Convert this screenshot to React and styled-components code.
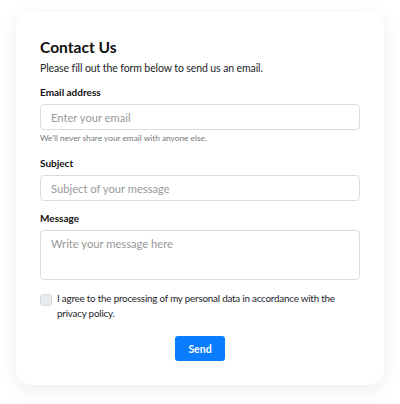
import React from "react";
import styled, { createGlobalStyle } from "styled-components";

const GlobalStyle = createGlobalStyle`
  * { box-sizing: border-box; }
  body {
    margin: 0;
    background: #ffffff;
    font-family: Lato, "Open Sans", sans-serif;
    color: #212529;
  }
`;

const Page = styled.div`
  padding: 12px 16px 20px;
`;

const Card = styled.form`
  background: #fff;
  border-radius: 16px;
  box-shadow: 0 4px 18px rgba(0, 0, 0, 0.08);
  padding: 25px 24px 24px;
  display: flex;
  flex-direction: column;
`;

const Title = styled.h1`
  margin: 0;
  font-size: 15.6px;
  line-height: 20px;
  font-weight: 700;
  color: #111;
`;

const Lead = styled.p`
  margin: 3px 0 0;
  font-size: 10.5px;
  letter-spacing: -0.1px;
  line-height: 16px;
  color: #212529;
`;

const Field = styled.div`
  display: flex;
  flex-direction: column;
  margin-top: ${(p) => p.$gap}px;
`;

const Label = styled.label`
  font-size: 10px;
  line-height: 14px;
  font-weight: 700;
  color: #111;
  margin-bottom: 5px;
`;

const Input = styled.input`
  width: 100%;
  height: 26px;
  border: 1px solid #dcdcdc;
  border-radius: 4px;
  padding: 0 10px;
  font-family: inherit;
  font-size: 11.2px;
  color: #333;
  outline: none;
  &::placeholder { color: #999; }
`;

const TextArea = styled.textarea`
  width: 100%;
  height: 50px;
  border: 1px solid #dcdcdc;
  border-radius: 4px;
  padding: 6px 10px;
  font-family: inherit;
  font-size: 11.2px;
  color: #333;
  resize: none;
  outline: none;
  &::placeholder { color: #999; }
`;

const Help = styled.small`
  margin-top: 2px;
  font-size: 8.3px;
  line-height: 12px;
  color: #777;
`;

const Consent = styled.label`
  display: flex;
  align-items: flex-start;
  gap: 5px;
  margin-top: 11px;
  font-size: 9.8px;
  letter-spacing: -0.2px;
  line-height: 15px;
  color: #212529;
`;

const Box = styled.span`
  flex: none;
  width: 12px;
  height: 12px;
  margin-top: 3px;
  border: 1px solid #d8d8d8;
  border-radius: 3px;
  background: #e9ecef;
`;

const Actions = styled.div`
  display: flex;
  justify-content: center;
  margin-top: 15px;
`;

const Button = styled.button`
  width: 50px;
  height: 25px;
  border: 0;
  border-radius: 3px;
  background: #0a7cff;
  color: #fff;
  font-family: inherit;
  font-size: 10.5px;
  font-weight: 700;
`;

export default function App() {
  return (
    <>
      <GlobalStyle />
      <Page>
        <Card onSubmit={(e) => e.preventDefault()}>
          <Title>Contact Us</Title>
          <Lead>Please fill out the form below to send us an email.</Lead>

          <Field $gap={9}>
            <Label>Email address</Label>
            <Input type="email" placeholder="Enter your email" />
            <Help>We'll never share your email with anyone else.</Help>
          </Field>

          <Field $gap={12}>
            <Label>Subject</Label>
            <Input placeholder="Subject of your message" />
          </Field>

          <Field $gap={10}>
            <Label>Message</Label>
            <TextArea placeholder="Write your message here" />
          </Field>

          <Consent>
            <Box />
            <span>
              I agree to the processing of my personal data in accordance with
              the privacy policy.
            </span>
          </Consent>

          <Actions>
            <Button type="submit">Send</Button>
          </Actions>
        </Card>
      </Page>
    </>
  );
}
